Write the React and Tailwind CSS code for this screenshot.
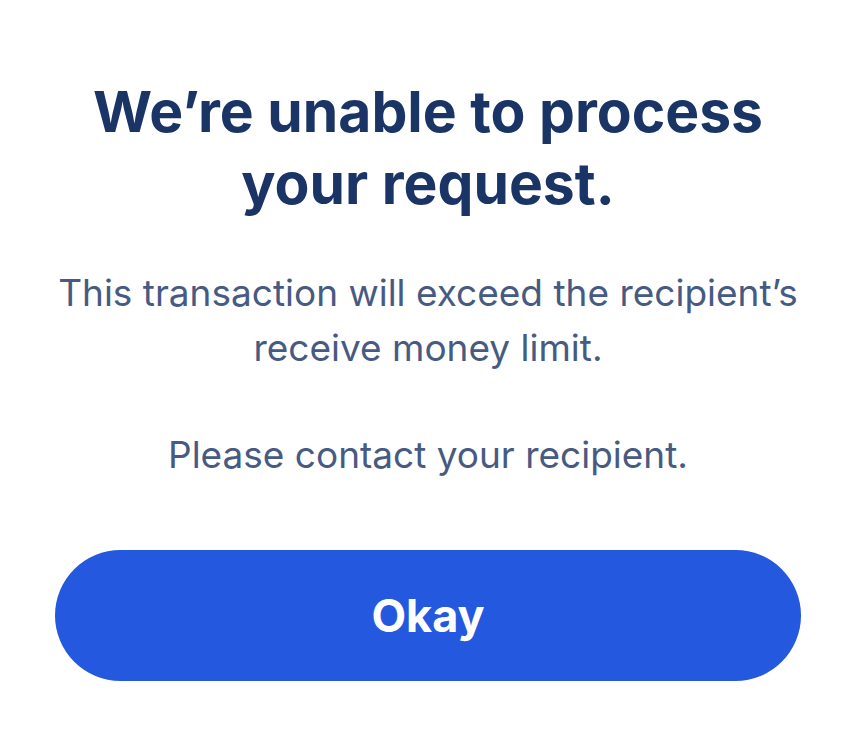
import React from "react";

export default function App() {
  return (
    <div className="min-h-screen w-full bg-white flex flex-col items-center px-[55px] pt-[76px]" style={{ fontFamily: "Inter, 'Noto Sans', sans-serif" }}>
      <h1 className="text-center font-bold text-[#1b3466] text-[57px] leading-[72px]">
        We’re unable to process
        <br />
        your request.
      </h1>
      <p className="mt-[45px] text-center text-[#475a82] text-[37px] leading-[55px]">
        This transaction will exceed the recipient’s
        <br />
        receive money limit.
      </p>
      <p className="mt-[52px] text-center text-[#475a82] text-[37px] leading-[55px]">
        Please contact your recipient.
      </p>
      <button className="mt-[68px] w-full h-[131px] rounded-full bg-[#2458de] text-white font-bold text-[45px]">
        Okay
      </button>
    </div>
  );
}
